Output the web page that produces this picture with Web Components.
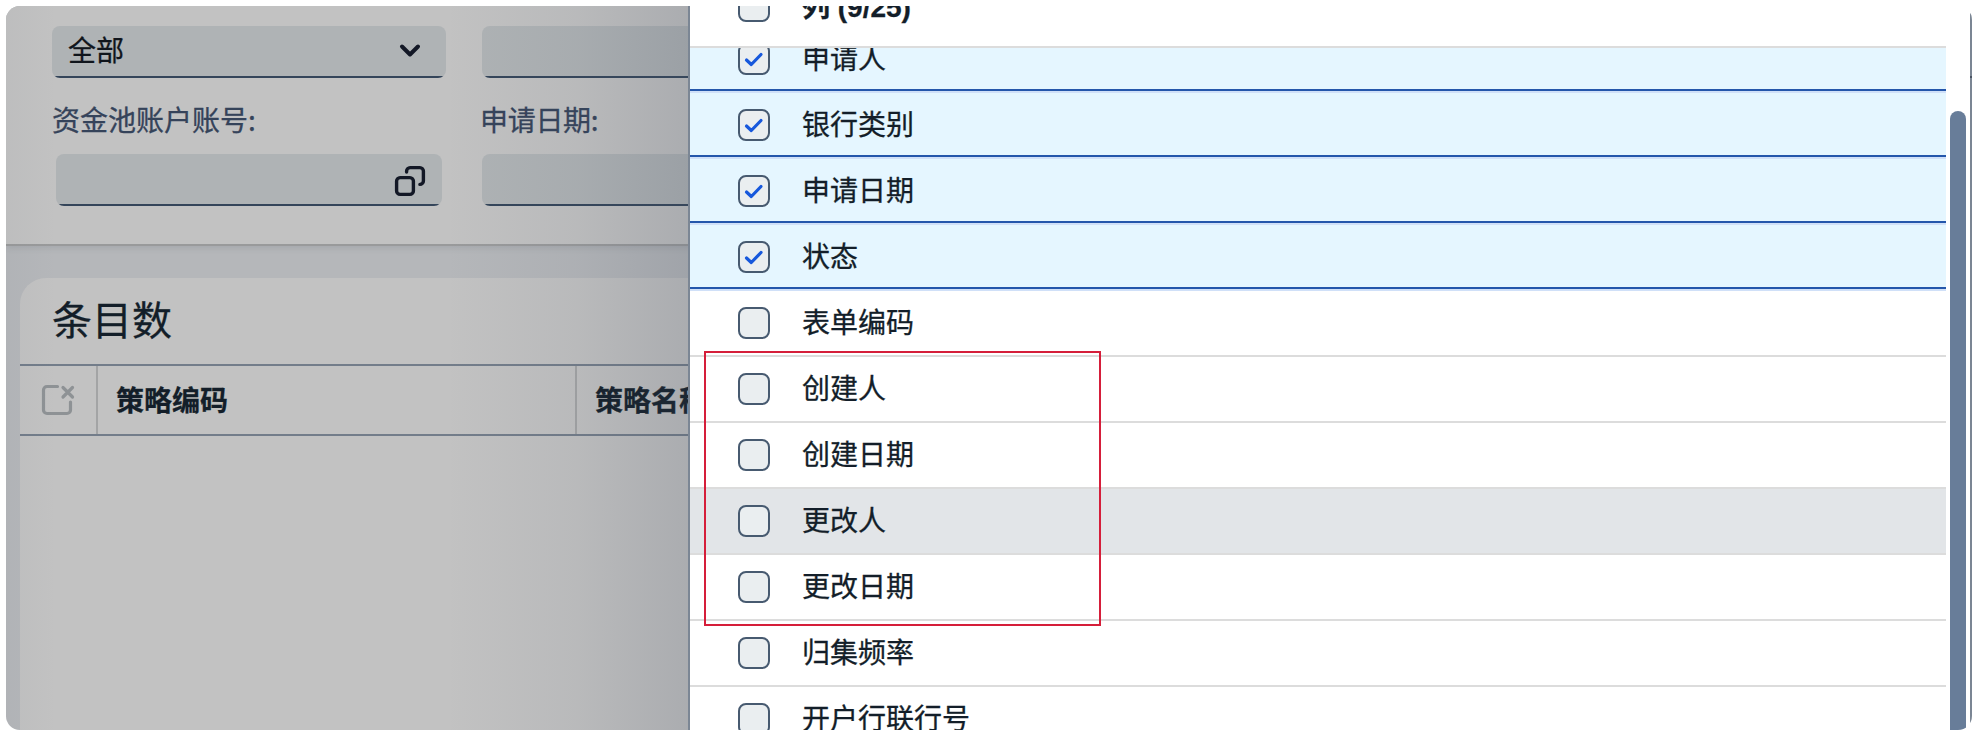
<!DOCTYPE html>
<html lang="zh-CN">
<head>
<meta charset="utf-8">
<title>条目数</title>
<style>
    html, body {
        margin: 0;
        height: 736px;
        overflow: hidden;
        background: #fff;
    }

    body {
        box-sizing: border-box;
        padding: 6px;
        font: 28px/40px "Noto Sans CJK SC", "Noto Sans", sans-serif;
        color: #131e29;
        -webkit-text-stroke: .3px;
    }
</style>
</head>
<body>
<app-window>
    <filter-bar slot="page">
        <filter-field icon="arrow">全部</filter-field>
        <filter-field></filter-field>
        <filter-field label="资金池账户账号:" icon="help" inset></filter-field>
        <filter-field label="申请日期:" class="second"></filter-field>
    </filter-bar>
    <entry-table slot="page" title-text="条目数">
        <span>策略编码</span>
        <span>策略名称</span>
    </entry-table>

    <column-panel slot="panel">
        <column-item slot="head" head>列 (9/25)</column-item>
        <column-item checked>申请人</column-item>
        <column-item checked>银行类别</column-item>
        <column-item checked>申请日期</column-item>
        <column-item checked>状态</column-item>
        <column-item>表单编码</column-item>
        <column-item>创建人</column-item>
        <column-item>创建日期</column-item>
        <column-item hovered>更改人</column-item>
        <column-item>更改日期</column-item>
        <column-item>归集频率</column-item>
        <column-item>开户行联行号</column-item>
    </column-panel>
</app-window>

<script>
function addShadow (element, html) {
    const template = document.createElement ("template");
    template.innerHTML = html;
    element.attachShadow ({mode: "open"}).appendChild (template.content.cloneNode (true));
}

const icons = {
    arrow: `<svg width="32" height="32" viewBox="0 0 32 32" fill="none" stroke="#131826" stroke-width="4" stroke-linecap="round" stroke-linejoin="round">
        <path d="M8 12.5 L16 20.5 L24 12.5"/></svg>`,
    help: `<svg width="32" height="32" viewBox="0 0 32 32" fill="none" stroke="#131826" stroke-width="3.4" stroke-linecap="round" stroke-linejoin="round">
        <rect x="2.6" y="12.6" width="16.8" height="16.8" rx="3.5"/>
        <path d="M12.6 7V6.1a3.5 3.5 0 0 1 3.5-3.5h9.8a3.5 3.5 0 0 1 3.5 3.5v9.8a3.5 3.5 0 0 1-3.5 3.5"/></svg>`,
    clear: `<svg width="34" height="32" viewBox="0 0 34 32" fill="none" stroke="#8e9295" stroke-width="3.2" stroke-linecap="round" stroke-linejoin="round">
        <path d="M16.5 2.5H6A3.5 3.5 0 0 0 2.5 6v20A3.5 3.5 0 0 0 6 29.5h20A3.5 3.5 0 0 0 29.500 26v-8M22 3.500l9.500 9.500M31.500 3.500L22 13"/></svg>`
};

class AppWindow extends HTMLElement {
    constructor () {
        super ();
        addShadow (this, `
<style>
    :host {
        display: flex;
        position: relative;
        height: 724px;
        overflow: hidden;
        border-radius: 14px;
    }

    .page {
        width: 682px;
        flex: none;
        overflow: hidden;
        display: flex;
        flex-direction: column;
        background: #b5b7ba;
        position: relative;
    }

    /* shadow that the open panel throws on the page */
    .page::after {
        content: "";
        position: absolute;
        inset: 0;
        background: linear-gradient(90deg, rgba(70, 80, 98, .04) 0, rgba(70, 80, 98, 0) 50px, rgba(70, 80, 98, 0) 440px, rgba(70, 80, 98, .07) 570px, rgba(70, 80, 98, .19) 682px);
    }

    .edge {
        width: 2px;
        background: #7b8694;
    }

    .edge.right {
        margin-top: 6px;
        background: linear-gradient(#4a5463, #4a5463) 0 64px / 2px 2px no-repeat #7b8694;
    }

    .mark {
        position: absolute;
        box-sizing: border-box;
        left: 698px;
        top: 345px;
        width: 397px;
        height: 275px;
        border: 2px solid #d51e3a;
    }
</style>
<div class="page"><slot name="page"></slot></div>
<div class="edge"></div>
<slot name="panel"></slot>
<div class="edge right"></div>
<div class="mark"></div>`);
    }
}

class FilterBar extends HTMLElement {
    constructor () {
        super ();
        addShadow (this, `
<style>
    :host {
        box-sizing: border-box;
        flex: none;
        display: grid;
        grid-template-columns: 394px 394px;
        grid-template-rows: 52px 108px;
        column-gap: 36px;
        row-gap: 20px;
        width: 1000px;
        height: 240px;
        padding: 20px 46px 0;
        background: #c2c2c2;
        border-bottom: 2px solid #999a9b;
        box-shadow: 0 2px 6px rgba(60, 65, 70, .12);
    }
</style>
<slot></slot>`);
    }
}

class FilterField extends HTMLElement {
    connectedCallback () {
        const label = this.getAttribute ("label");
        addShadow (this, `
<style>
    :host {
        display: block;
    }

    label {
        display: block;
        height: 56px;
        line-height: 42px;
        color: #35435a;
    }

    :host(.second) label {
        margin-left: -2px;
        letter-spacing: -.3px;
    }

    .box {
        box-sizing: border-box;
        display: flex;
        justify-content: space-between;
        align-items: center;
        height: 52px;
        padding: 0 20px 4px 16px;
        border-radius: 8px;
        color: #10151c;
        background: linear-gradient(#34455a, #34455a) bottom / 100% 2px no-repeat #afb3b5;
    }

    .box span {
        margin-top: -3px;
    }

    :host([inset]) .box {
        margin: 0 4px;
        padding: 2px 16px 0;
    }

    svg {
        flex: none;
    }
</style>
${label ? `<label>${label}</label>` : ""}
<div class="box"><span><slot></slot></span>${icons[this.getAttribute ("icon")] || ""}</div>`);
    }
}

class EntryTable extends HTMLElement {
    connectedCallback () {
        addShadow (this, `
<style>
    :host {
        flex: 1;
        display: block;
        width: 1000px;
        margin: 32px 0 0 14px;
        background: #c2c2c2;
        border-top-left-radius: 26px;
    }

    h2 {
        margin: 0;
        height: 86px;
        padding-left: 32px;
        font-size: 40px;
        font-weight: 400;
        line-height: 81px;
    }

    .head {
        display: grid;
        grid-template-columns: 78px 479px 1fr;
        height: 68px;
        border-top: 2px solid #737d8a;
        border-bottom: 2px solid #737d8a;
        font-weight: 700;
        line-height: 66px;
    }

    .icon {
        display: flex;
        align-items: center;
        box-sizing: border-box;
        padding-left: 21px;
        border-right: 2px solid #a3a4a5;
    }

    ::slotted(span) {
        padding-left: 18px;
        border-right: 2px solid #a3a4a5;
    }
</style>
<h2>${this.getAttribute ("title-text")}</h2>
<div class="head"><div class="icon">${icons.clear}</div><slot></slot></div>`);
    }
}

class ColumnPanel extends HTMLElement {
    constructor () {
        super ();
        addShadow (this, `
<style>
    :host {
        flex: 1;
        display: flex;
        height: 724px;
        background: #fff;
    }

    .list {
        flex: 1;
        height: 724px;
        overflow: hidden;
        display: flex;
        flex-direction: column;
    }

    .head {
        flex: none;
        height: 40px;
        border-bottom: 2px solid #dcdcdc;
        overflow: hidden;
    }

    .rows {
        flex: 1;
        min-height: 0;
        overflow: hidden;
    }

    /* list is scrolled by part of a row */
    .rows slot {
        display: block;
        margin-top: -23px;
    }

    .track {
        box-sizing: border-box;
        width: 24px;
        padding: 105px 4px 0;
    }

    .thumb {
        height: 100%;
        border-radius: 8px 8px 0 0;
        background: #687d99;
    }
</style>
<div class="list">
    <div class="head"><slot name="head"></slot></div>
    <div class="rows"><slot></slot></div>
</div>
<div class="track"><div class="thumb"></div></div>`);
    }
}

class ColumnItem extends HTMLElement {
    constructor () {
        super ();
        addShadow (this, `
<style>
    :host {
        box-sizing: border-box;
        display: flex;
        align-items: flex-start;
        gap: 32px;
        height: 66px;
        padding: 18px 0 0 48px;
        background: #fff;
        box-shadow: inset 0 2px #dcdcdc;
    }

    :host([checked]) {
        background: #e5f6ff;
        border-bottom: 2px solid #2456ab;
    }

    :host([hovered]) {
        background: #e2e5e8;
    }

    :host([head]) {
        margin-top: -34px;
        box-shadow: none;
        font-family: "Liberation Sans", "Noto Sans CJK SC", sans-serif;
        font-weight: 700;
    }

    .check {
        box-sizing: border-box;
        width: 32px;
        height: 32px;
        border: 2px solid #475a70;
        border-radius: 8px;
        background: #eaeef0;
    }

    svg {
        display: none;
    }

    :host([checked]) svg {
        display: block;
    }

    .text {
        margin-top: -6px;
    }

    :host([head]) .text {
        margin-top: -2px;
    }
</style>
<div class="check"><svg width="28" height="28" viewBox="0 0 28 28" fill="none" stroke="#1758dc" stroke-width="3.2" stroke-linecap="round" stroke-linejoin="round">
    <path d="M6.500 15 L11.300 19.500 L21 9.500"/></svg></div>
<div class="text"><slot></slot></div>`);
    }

    connectedCallback () {
        // pale line just under each selected row
        const previous = this.previousElementSibling;
        if (previous && previous.hasAttribute ("checked")) {
            this.style.boxShadow = "inset 0 2px #d0e0f8";
        }
    }
}

customElements.define ("app-window", AppWindow);
customElements.define ("filter-bar", FilterBar);
customElements.define ("filter-field", FilterField);
customElements.define ("entry-table", EntryTable);
customElements.define ("column-panel", ColumnPanel);
customElements.define ("column-item", ColumnItem);
</script>
</body>
</html>
